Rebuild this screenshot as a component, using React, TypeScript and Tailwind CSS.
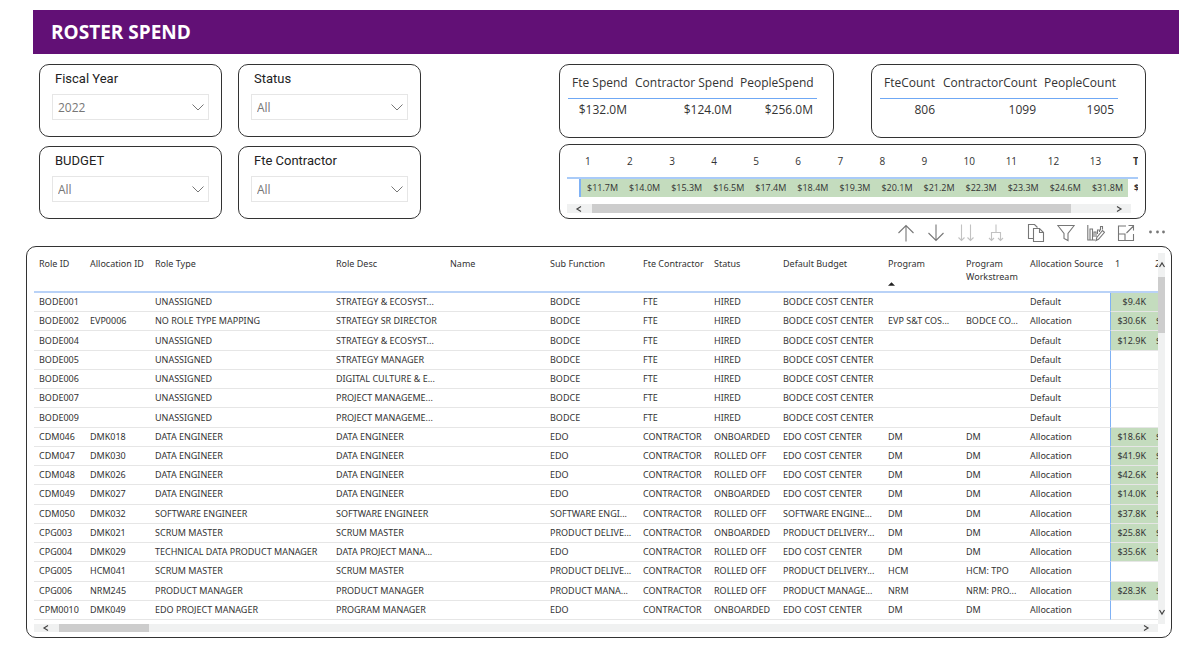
import React from "react";

const filters = [
  { id: "fiscal-year", label: "Fiscal Year", value: "2022" },
  { id: "status", label: "Status", value: "All" },
  { id: "budget", label: "BUDGET", value: "All" },
  { id: "fte-contractor", label: "Fte Contractor", value: "All" },
];

const periods = [
  "$11.7M", "$14.0M", "$15.3M", "$16.5M", "$17.4M", "$18.4M", "$19.3M",
  "$20.1M", "$21.2M", "$22.3M", "$23.3M", "$24.6M", "$31.8M",
];

const columns = [
  { title: "Role ID", width: "w-[51px]" },
  { title: "Allocation ID", width: "w-[65px]" },
  { title: "Role Type", width: "w-[181px]" },
  { title: "Role Desc", width: "w-[114px]" },
  { title: "Name", width: "w-[100px]" },
  { title: "Sub Function", width: "w-[93px]" },
  { title: "Fte Contractor", width: "w-[71px]" },
  { title: "Status", width: "w-[69px]" },
  { title: "Default Budget", width: "w-[105px]" },
  { title: "Program", width: "w-[78px]" },
  { title: "Program Workstream", width: "w-[64px]" },
  { title: "Allocation Source", width: "w-[85px]" },
];

// role id, allocation id, type, desc, name, sub function, contract, status, budget, program, workstream, source, period 1
const rows = [
  ["BODE001", "", "UNASSIGNED", "STRATEGY & ECOSYST...", "", "BODCE", "FTE", "HIRED", "BODCE COST CENTER", "", "", "Default", "$9.4K"],
  ["BODE002", "EVP0006", "NO ROLE TYPE MAPPING", "STRATEGY SR DIRECTOR", "", "BODCE", "FTE", "HIRED", "BODCE COST CENTER", "EVP S&T COS...", "BODCE CO...", "Allocation", "$30.6K"],
  ["BODE004", "", "UNASSIGNED", "STRATEGY & ECOSYST...", "", "BODCE", "FTE", "HIRED", "BODCE COST CENTER", "", "", "Default", "$12.9K"],
  ["BODE005", "", "UNASSIGNED", "STRATEGY MANAGER", "", "BODCE", "FTE", "HIRED", "BODCE COST CENTER", "", "", "Default", ""],
  ["BODE006", "", "UNASSIGNED", "DIGITAL CULTURE & E...", "", "BODCE", "FTE", "HIRED", "BODCE COST CENTER", "", "", "Default", ""],
  ["BODE007", "", "UNASSIGNED", "PROJECT MANAGEME...", "", "BODCE", "FTE", "HIRED", "BODCE COST CENTER", "", "", "Default", ""],
  ["BODE009", "", "UNASSIGNED", "PROJECT MANAGEME...", "", "BODCE", "FTE", "HIRED", "BODCE COST CENTER", "", "", "Default", ""],
  ["CDM046", "DMK018", "DATA ENGINEER", "DATA ENGINEER", "", "EDO", "CONTRACTOR", "ONBOARDED", "EDO COST CENTER", "DM", "DM", "Allocation", "$18.6K"],
  ["CDM047", "DMK030", "DATA ENGINEER", "DATA ENGINEER", "", "EDO", "CONTRACTOR", "ROLLED OFF", "EDO COST CENTER", "DM", "DM", "Allocation", "$41.9K"],
  ["CDM048", "DMK026", "DATA ENGINEER", "DATA ENGINEER", "", "EDO", "CONTRACTOR", "ROLLED OFF", "EDO COST CENTER", "DM", "DM", "Allocation", "$42.6K"],
  ["CDM049", "DMK027", "DATA ENGINEER", "DATA ENGINEER", "", "EDO", "CONTRACTOR", "ONBOARDED", "EDO COST CENTER", "DM", "DM", "Allocation", "$14.0K"],
  ["CDM050", "DMK032", "SOFTWARE ENGINEER", "SOFTWARE ENGINEER", "", "SOFTWARE ENGI...", "CONTRACTOR", "ROLLED OFF", "SOFTWARE ENGINE...", "DM", "DM", "Allocation", "$37.8K"],
  ["CPG003", "DMK021", "SCRUM MASTER", "SCRUM MASTER", "", "PRODUCT DELIVE...", "CONTRACTOR", "ONBOARDED", "PRODUCT DELIVERY...", "DM", "DM", "Allocation", "$25.8K"],
  ["CPG004", "DMK029", "TECHNICAL DATA PRODUCT MANAGER", "DATA PROJECT MANA...", "", "EDO", "CONTRACTOR", "ROLLED OFF", "EDO COST CENTER", "DM", "DM", "Allocation", "$35.6K"],
  ["CPG005", "HCM041", "SCRUM MASTER", "SCRUM MASTER", "", "PRODUCT DELIVE...", "CONTRACTOR", "ROLLED OFF", "PRODUCT DELIVERY...", "HCM", "HCM: TPO", "Allocation", ""],
  ["CPG006", "NRM245", "PRODUCT MANAGER", "PRODUCT MANAGER", "", "PRODUCT MANA...", "CONTRACTOR", "ROLLED OFF", "PRODUCT MANAGE...", "NRM", "NRM: PRO...", "Allocation", "$28.3K"],
  ["CPM0010", "DMK049", "EDO PROJECT MANAGER", "PROGRAM MANAGER", "", "EDO", "CONTRACTOR", "ONBOARDED", "EDO COST CENTER", "DM", "DM", "Allocation", ""],
];

function Arrow({ d }: { d: string }) {
  return (
    <svg viewBox="0 0 8 8" className="w-2 h-2 shrink-0" fill="none" stroke="#444" strokeWidth="1.2">
      <path d={d} />
    </svg>
  );
}

function FilterCard({ id, label, value }: { id: string; label: string; value: string }) {
  return (
    <div className="h-[73px] rounded-[10px] border border-[#333] px-3 pt-1">
      <label htmlFor={id} className="block pl-[3px] font-[Roboto,sans-serif] text-[13px] leading-5 font-normal text-[#222]">
        {label}
      </label>
      <div className="relative mt-[5px]">
        <select
          id={id}
          className="block w-full h-[26px] appearance-none rounded-none border border-[#e6e6e6] bg-white pl-[5px] pt-[2px] text-[12px] text-[#777]"
        >
          <option>{value}</option>
        </select>
        <svg viewBox="0 0 12 7" className="pointer-events-none absolute right-[5px] top-[10px] w-3 h-[7px]" fill="none" stroke="#777">
          <path d="M.5.5 6 6 11.5.5" />
        </svg>
      </div>
    </div>
  );
}

function TotalsCard({ items, width }: { items: { title: string; value: string; width: string }[]; width: string }) {
  return (
    <div className="h-[74px] w-[275px] rounded-[10px] border border-[#333] pl-2 pt-[3px]">
      <table className={`${width} table-fixed border-separate border-spacing-0 text-[12px] leading-4 text-[#333]`}>
        <thead>
          <tr>
            {items.map((item) => (
              <th key={item.title} className={`${item.width} h-[31px] border-b border-[#6fa8f5] pl-1 text-left font-normal whitespace-nowrap`}>
                {item.title}
              </th>
            ))}
          </tr>
        </thead>
        <tbody>
          <tr>
            {items.map((item) => (
              <td key={item.title} className="h-[21px] pr-1 text-right">
                {item.value}
              </td>
            ))}
          </tr>
        </tbody>
      </table>
    </div>
  );
}

function PeriodCard() {
  return (
    <div className="h-[75px] rounded-[10px] border border-[#333] pl-[7px] pr-[7px]">
      <div className="h-[59px] overflow-hidden">
        <table className="w-[601px] table-fixed border-separate border-spacing-0 text-[9px] leading-3 text-[#333]">
          <thead>
            <tr>
              <th className="w-[14px] border-b-2 border-[#a9cbf8]"></th>
              {periods.map((_, index) => (
                <th key={index} className="h-[34px] border-b-2 border-[#a9cbf8] pl-1 text-left text-[10px] font-normal">
                  {index + 1}
                </th>
              ))}
              <th className="w-[40px] border-b-2 border-[#a9cbf8] pl-[5px] text-left text-[10px] font-bold">Total</th>
            </tr>
          </thead>
          <tbody>
            <tr>
              <td className="border-r-2 border-[#7fb1f5]"></td>
              {periods.map((value, index) => (
                <td key={index} className="h-[18px] bg-[#c4dcbe] pr-[5px] text-right">
                  {value}
                </td>
              ))}
              <td className="pl-[6px] font-bold">$256.0M</td>
            </tr>
          </tbody>
        </table>
      </div>
      <div className="mr-[7px] flex h-[9px] items-center justify-between bg-[#f0f1f1] px-2">
        <Arrow d="M6 1.5 2 4l4 2.5" />
        <div className="ml-[9px] h-full w-[479px] bg-[#cdcdcd]" />
        <div className="flex flex-1 justify-end">
          <Arrow d="M2 1.5 6 4 2 6.5" />
        </div>
      </div>
    </div>
  );
}

function ToolButton({ label, faded, children }: { label: string; faded?: boolean; children: React.ReactNode }) {
  return (
    <button aria-label={label} className="flex w-[30px] h-[27px] items-center justify-center">
      <svg viewBox="0 0 18 18" className="w-[18px] h-[18px]" fill="none" stroke={faded ? "#c2c2c2" : "#777"} strokeWidth="1.1">
        {children}
      </svg>
    </button>
  );
}

function Toolbar() {
  return (
    <div className="flex h-[27px] justify-end gap-[10px] pr-[14px]">
      <div className="flex">
        <ToolButton label="Drill up">
          <path d="M9 17.5V1.5M1.5 9 9 1.5 16.5 9" />
        </ToolButton>
        <ToolButton label="Drill down">
          <path d="M9 .5v16M1.5 9 9 16.5 16.5 9" />
        </ToolButton>
        <ToolButton label="Next level" faded>
          <path d="M4.5.5v16M1.5 13.5l3 3 3-3M13.5.5v16M10.5 13.5l3 3 3-3" />
        </ToolButton>
        <ToolButton label="Expand all" faded>
          <path d="M9 .5v8M4.5 16.5v-8h9v8M2 14l2.500 2.500L7 14M11 14l2.500 2.500L16 14" />
        </ToolButton>
      </div>
      <div className="flex">
        <ToolButton label="Copy">
          <path d="M6 14.500H1.500V.500h6l3 3M6.500 4.500h6l4 4v9h-10zM12.500 4.500v4h4" />
        </ToolButton>
        <ToolButton label="Filters">
          <path d="M.8 1.500h16.400L11 9.500v7L7 14.500v-5z" />
        </ToolButton>
        <ToolButton label="Personalize">
          <path d="M.8 1v15H8M3 15.500V5h2.500v10.500M7 13V8h2v5M10.500 10V6h2v2M13.500 6.500V2.500h2v3M9 16.500l.8-3L15.500 6.500l2 1.800-6 7z" />
        </ToolButton>
        <ToolButton label="Focus mode">
          <path d="M9 2H1.500v14.500h15V10M1.500 10h6.500v6.500M9.500 9l7-7M11.500 1.500h5v5" />
        </ToolButton>
        <ToolButton label="More options">
          <g fill="#777" stroke="none">
            <circle cx="3.500" cy="8" r="1.400" />
            <circle cx="10.500" cy="8" r="1.400" />
            <circle cx="16.500" cy="8" r="1.400" />
          </g>
        </ToolButton>
      </div>
    </div>
  );
}

function RosterTable() {
  return (
    <div className="rounded-[10px] border border-[#333] pt-[6px] pr-[6px] pb-[5px] pl-[7px]">
      <div className="flex h-[371px]">
        <div className="min-w-0 flex-1 overflow-hidden">
          <table className="h-[367px] w-[1121px] table-fixed border-separate border-spacing-0 font-['Noto_Sans',sans-serif] text-[9px] leading-3 text-[#333]">
            <thead>
              <tr>
                {columns.map((col) => (
                  <th key={col.title} className={`${col.width} h-10 border-b-2 border-[#b9d2f7] pt-1 pl-[5px] text-left align-top leading-[13px] font-normal`}>
                    {col.title}
                    {col.title === "Program" && (
                      <svg viewBox="0 0 8 4" className="mt-3 w-[7px] h-1" fill="#222">
                        <path d="M0 4 4 0l4 4z" />
                      </svg>
                    )}
                  </th>
                ))}
                <th className="w-[43px] border-b-2 border-[#b9d2f7] pt-1 pl-[5px] text-left align-top leading-[13px] font-normal">1</th>
                <th className="w-[45px] border-b-2 border-[#b9d2f7] pt-1 pl-[2px] text-left align-top leading-[13px] font-normal">2</th>
              </tr>
            </thead>
            <tbody>
              {rows.map((row) => {
                const spend = row[12];
                return (
                  <tr key={row[0]}>
                    {row.slice(0, 12).map((cell, index) => (
                      <td key={index} className="border-b border-[#e6e6e6] pl-[5px] whitespace-nowrap">
                        {cell}
                      </td>
                    ))}
                    <td className={`border-b border-l border-b-[#e6e6e6] border-l-[#7fb1f5] pr-[7px] text-right ${spend ? "bg-[#c4dcbe]" : ""}`}>
                      {spend}
                    </td>
                    <td className={`border-b border-[#e6e6e6] pl-[3px] ${spend ? "bg-[#c4dcbe]" : ""}`}>
                      {spend.length > 5 ? "$" : ""}
                    </td>
                  </tr>
                );
              })}
            </tbody>
          </table>
        </div>
        <div className="flex w-[7px] flex-col items-center bg-[#f0f1f1] pt-2 pb-2">
          <Arrow d="M1.5 6 4 2l2.500 4" />
          <div className="mt-2 h-[56px] w-full bg-[#cdcdcd]" />
          <div className="flex flex-1 items-end">
            <Arrow d="M1.500 2 4 6l2.500-4" />
          </div>
        </div>
      </div>
      <div className="mr-[7px] flex h-2 items-center bg-[#f0f1f1] px-2">
        <Arrow d="M6 1.500 2 4l4 2.500" />
        <div className="ml-[9px] h-full w-[90px] bg-[#cdcdcd]" />
        <div className="flex flex-1 justify-end">
          <Arrow d="M2 1.500 6 4 2 6.500" />
        </div>
      </div>
    </div>
  );
}

export default function App() {
  return (
    <main className="min-h-screen bg-white pt-[10px] pb-3 font-['Open_Sans',sans-serif]">
      <header className="mr-[6px] ml-[33px] flex h-11 items-center bg-[#621076] pl-[18px]">
        <h1 className="text-[19px] leading-6 font-bold text-white">ROSTER SPEND</h1>
      </header>

      <div className="flex justify-between px-[39px] pt-[10px]">
        <div className="grid grid-cols-[183px_183px] content-start gap-x-4 gap-y-[9px]">
          {filters.map((filter) => (
            <FilterCard key={filter.id} {...filter} />
          ))}
        </div>
        <div className="flex w-[587px] flex-col gap-[6px]">
          <div className="flex justify-between">
            <TotalsCard
              width="w-[249px]"
              items={[
                { title: "Fte Spend", value: "$132.0M", width: "w-[63px]" },
                { title: "Contractor Spend", value: "$124.0M", width: "w-[105px]" },
                { title: "PeopleSpend", value: "$256.0M", width: "w-[81px]" },
              ]}
            />
            <TotalsCard
              width="w-[238px]"
              items={[
                { title: "FteCount", value: "806", width: "w-[59px]" },
                { title: "ContractorCount", value: "1099", width: "w-[101px]" },
                { title: "PeopleCount", value: "1905", width: "w-[78px]" },
              ]}
            />
          </div>
          <PeriodCard />
        </div>
      </div>

      <Toolbar />

      <div className="mr-[13px] ml-[26px]">
        <RosterTable />
      </div>
    </main>
  );
}
